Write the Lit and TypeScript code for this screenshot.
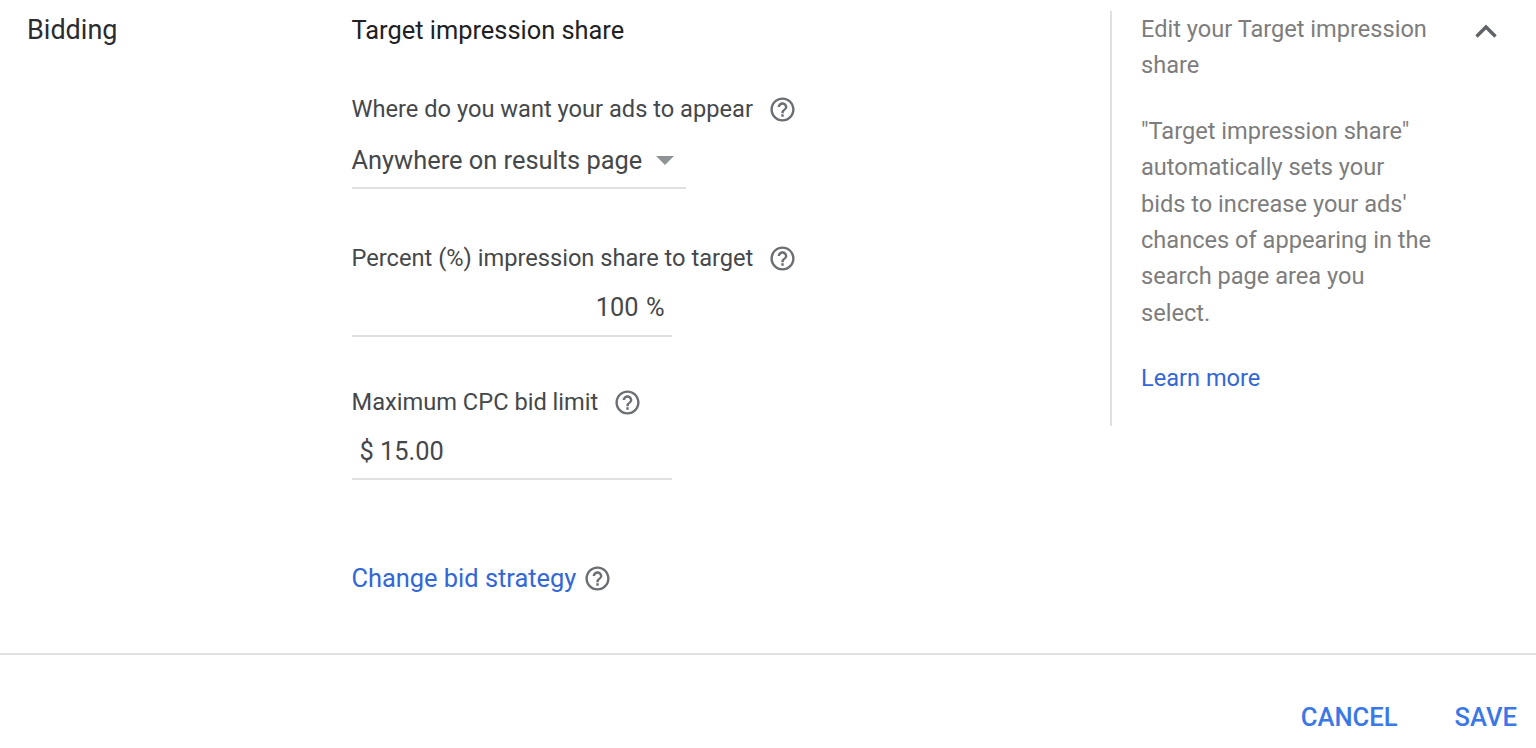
import { LitElement, html, css, svg } from "lit";
import { customElement } from "lit/decorators.js";

const help = html`<svg class="help" viewBox="0 0 24 24" width="29" height="29" aria-hidden="true">
  <path fill="#6b6e72" d="M11 18h2v-2h-2v2zm1-16C6.48 2 2 6.48 2 12s4.48 10 10 10 10-4.48 10-10S17.52 2 12 2zm0 18c-4.41 0-8-3.59-8-8s3.59-8 8-8 8 3.59 8 8-3.59 8-8 8zm0-14c-2.21 0-4 1.79-4 4h2c0-1.1.9-2 2-2s2 .9 2 2c0 2-3 1.75-3 5h2c0-2.25 3-2.5 3-5 0-2.21-1.79-4-4-4z"/>
</svg>`;

@customElement("app-root")
export class AppRoot extends LitElement {
  static styles = css`
    :host { display: block; width: 1536px; height: 748px; overflow: hidden; background: #fff;
      font-family: Roboto, "Liberation Sans", sans-serif; font-size: 25.4px; color: #45484b; }
    .main { height: 653px; display: flex; box-sizing: border-box; padding-top: 11px; }
    .title { width: 324.5px; margin-left: 27px; padding-top: 1px; color: #2a2c2f; line-height: 36px; font-size: 27px; }
    .form { width: 758.5px; padding-top: 1px; line-height: 36px; }
    .heading { color: #202124; }
    .label { display: flex; align-items: center; gap: 15px; font-size: 23.65px; height: 36px; }
    .field { box-sizing: border-box; border-bottom: 2px solid #e0e0e0; display: flex; align-items: center; }
    .select { width: 334.5px; margin-top: 15px; padding-bottom: 9px; gap: 14px; }
    .arrow { width: 0; height: 0; border-left: 9px solid transparent; border-right: 9px solid transparent; border-top: 9px solid #8f9396; }
    .num { width: 320px; }
    .pct { justify-content: flex-end; padding-right: 7px; margin-top: 13px; padding-bottom: 10px; word-spacing: 1px; }
    .cpc { padding-left: 8px; margin-top: 13px; padding-bottom: 9px; }
    .l1 { margin-top: 43px; }
    .l2 { margin-top: 51px; }
    .l3 { margin-top: 47px; }
    .link { color: #3367d6; }
    .side { box-sizing: border-box; width: 331px; height: 415px; border-left: 2px solid #e0e0e0; padding-left: 29px; color: #7d7d7d; line-height: 36.4px; font-size: 23.6px; }
    .side p { margin: 0 0 29px; width: 291px; }
    .chev { flex: none; margin: 13px 0 0 33px; }
    .footer { border-top: 2px solid #e0e0e0; display: flex; justify-content: flex-end; gap: 57px; padding: 45px 19px 0 0; font-weight: 500; font-size: 25.6px; color: #3b78e7; line-height: 34px; }
    .change { margin-top: 80px; display: flex; align-items: center; gap: 7px; }
  `;

  render() {
    return html`
      <div class="main">
        <div class="title">Bidding</div>
        <div class="form">
          <div class="heading">Target impression share</div>
          <div class="label l1">Where do you want your ads to appear ${help}</div>
          <div class="field select">Anywhere on results page <span class="arrow"></span></div>
          <div class="label l2">Percent (%) impression share to target ${help}</div>
          <div class="field num pct">100 %</div>
          <div class="label l3">Maximum CPC bid limit ${help}</div>
          <div class="field num cpc">$ 15.00</div>
          <div class="change"><span class="link">Change bid strategy</span> ${help}</div>
        </div>
        <div class="side">
          <p>Edit your Target impression share</p>
          <p>"Target impression share" automatically sets your bids to increase your ads' chances of appearing in the search page area you select.</p>
          <div class="link">Learn more</div>
        </div>
        <svg class="chev" viewBox="0 0 24 14" width="24" height="14" aria-hidden="true">
          ${svg`<path d="M2.5 12.5 12 3l9.5 9.5" fill="none" stroke="#5f6368" stroke-width="3.4"/>`}
        </svg>
      </div>
      <div class="footer"><span>CANCEL</span><span>SAVE</span></div>
    `;
  }
}
